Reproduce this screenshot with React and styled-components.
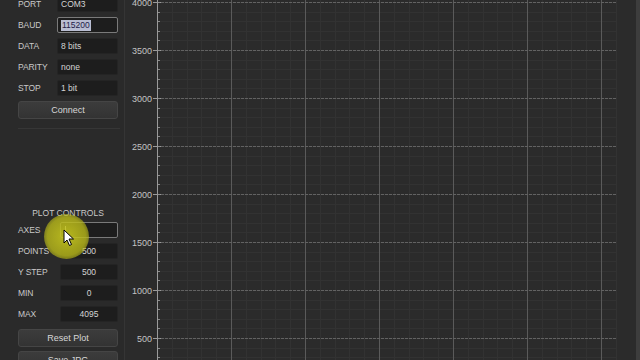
import React from "react";
import styled, { createGlobalStyle } from "styled-components";

const GlobalStyle = createGlobalStyle`
  html, body {
    margin: 0;
    padding: 0;
    background: #2b2b2b;
  }
  body {
    font-family: "Liberation Sans", Arial, sans-serif;
  }
`;

const Screen = styled.div`
  display: flex;
  width: 640px;
  height: 360px;
  overflow: hidden;
  background: #2b2b2b;
  position: relative;
`;

const Panel = styled.div`
  position: relative;
  width: 125px;
  flex-shrink: 0;
  background: #2a2a2a;
  border-right: 1px solid #353535;
  display: flex;
  flex-direction: column;
  padding-left: 18px;
  box-sizing: border-box;
  overflow: hidden;
`;

const Group = styled.div`
  display: flex;
  flex-direction: column;
  flex-shrink: 0;
  gap: 5px;
  width: 100px;
  margin-top: ${(p) => p.$top || 0}px;
`;

const Row = styled.div`
  display: grid;
  grid-template-columns: ${(p) => p.$label}px 1fr;
  align-items: center;
  height: 16px;
  flex-shrink: 0;
`;

const Label = styled.span`
  font-size: 8.5px;
  color: #c9c9c9;
  letter-spacing: -0.1px;
`;

const Field = styled.div`
  height: 16px;
  box-sizing: border-box;
  background: #1d1d1d;
  border: 1px solid ${(p) => (p.$focus ? "#7a7a7a" : "#242424")};
  border-radius: 2px;
  display: flex;
  align-items: center;
  justify-content: ${(p) => (p.$center ? "center" : "flex-start")};
  padding-left: ${(p) => (p.$center ? 0 : 3)}px;
  font-size: 8.5px;
  color: #d4d4d4;
`;

const Selected = styled.span`
  background: #b9bdd2;
  color: #1e2148;
  padding: 0 1px;
  line-height: 11px;
`;

const Caret = styled.span`
  width: 1px;
  height: 9px;
  background: #d0d0d0;
  margin-left: 1px;
`;

const Button = styled.div`
  height: 18px;
  flex-shrink: 0;
  width: 100px;
  box-sizing: border-box;
  border-radius: 3px;
  border: 1px solid #454545;
  background: linear-gradient(#3c3c3c, #333);
  display: flex;
  align-items: center;
  justify-content: center;
  font-size: 9px;
  color: #d6d6d6;
  margin-top: ${(p) => p.$top || 0}px;
`;

const Separator = styled.div`
  width: 102px;
  height: 1px;
  flex-shrink: 0;
  background: #363636;
  margin-top: 9px;
`;

const Title = styled.div`
  width: 100px;
  flex-shrink: 0;
  text-align: center;
  font-size: 8.5px;
  color: #c9c9c9;
  line-height: 12px;
  margin-top: 78px;
  margin-bottom: 3px;
`;

const Highlight = styled.div`
  position: absolute;
  left: 44px;
  top: 214px;
  width: 45px;
  height: 45px;
  border-radius: 50%;
  background: radial-gradient(circle, rgba(200, 200, 30, 0.9) 0%, rgba(185, 185, 25, 0.8) 60%, rgba(150, 150, 20, 0) 100%);
  pointer-events: none;
`;

const Cursor = styled.svg`
  position: absolute;
  left: 63px;
  top: 229px;
`;

const Chart = styled.div`
  flex: 1;
  position: relative;
  background: #2b2b2b;
`;

const Edge = styled.div`
  width: 4px;
  flex-shrink: 0;
  background: #3d3d3d;
`;

const serial = [
  ["PORT", "COM3"],
  ["BAUD", "115200"],
  ["DATA", "8 bits"],
  ["PARITY", "none"],
  ["STOP", "1 bit"],
];

const plot = [
  ["POINTS", "500"],
  ["Y STEP", "500"],
  ["MIN", "0"],
  ["MAX", "4095"],
];

const PlotGrid = () => {
  const x0 = 32;
  const x1 = 492;
  const step = 48;
  const colStep = 74;
  const labels = [4000, 3500, 3000, 2500, 2000, 1500, 1000, 500];
  const minorH = [];
  for (let y = 2; y < 360; y += step / 5) minorH.push(Math.round(y));
  const minorV = [];
  for (let x = x0; x <= x1; x += colStep / 5) minorV.push(Math.round(x));
  const cols = [];
  for (let x = x0 + colStep; x < x1; x += colStep) cols.push(x);
  return (
    <svg width="510" height="360" style={{ display: "block" }}>
      {minorH.map((y) => (
        <line key={"mh" + y} x1={x0} x2={x1} y1={y + 0.5} y2={y + 0.5} stroke="#323232" strokeWidth="1" />
      ))}
      {minorV.map((x) => (
        <line key={"mv" + x} x1={x + 0.5} x2={x + 0.5} y1={0} y2={360} stroke="#323232" strokeWidth="1" />
      ))}
      {cols.map((x) => (
        <line key={"c" + x} x1={x + 0.5} x2={x + 0.5} y1={0} y2={360} stroke="#5a5a5a" strokeWidth="1" />
      ))}
      {labels.map((v, i) => {
        const y = 2 + i * step + 0.5;
        return (
          <g key={v}>
            <line x1={x0} x2={x1} y1={y} y2={y} stroke="#626262" strokeWidth="1" strokeDasharray="3 1" />
            <line x1={x0 - 4} x2={x0 + 4} y1={y} y2={y} stroke="#9a9a9a" strokeWidth="1" />
            <text x={x0 - 5} y={y + 3} fontSize="9" fill="#c4c4c4" textAnchor="end" fontFamily="Liberation Sans, Arial, sans-serif">
              {v}
            </text>
          </g>
        );
      })}
      {minorH.map((y) => (
        <line key={"t" + y} x1={x0} x2={x0 + 3} y1={y + 0.5} y2={y + 0.5} stroke="#8a8a8a" strokeWidth="1" />
      ))}
      <line x1={x0 + 0.5} x2={x0 + 0.5} y1={0} y2={360} stroke="#9a9a9a" strokeWidth="1" />
    </svg>
  );
};

const App = () => {
  return (
    <>
      <GlobalStyle />
      <Screen>
        <Panel>
          <Group $top={-4}>
            {serial.map(([k, v]) => (
              <Row key={k} $label={39}>
                <Label>{k}</Label>
                <Field $focus={k === "BAUD"}>
                  {k === "BAUD" ? <Selected>{v}</Selected> : v}
                </Field>
              </Row>
            ))}
          </Group>
          <Button $top={5}>Connect</Button>
          <Separator />
          <Title>PLOT CONTROLS</Title>
          <Group>
            <Row $label={42}>
              <Label>AXES</Label>
              <Field $focus>
                <Caret />
              </Field>
            </Row>
            {plot.map(([k, v]) => (
              <Row key={k} $label={42}>
                <Label>{k}</Label>
                <Field $center>{v}</Field>
              </Row>
            ))}
            <Button $top={2}>Reset Plot</Button>
            <Button $top={-1}>Save JPG</Button>
          </Group>
          <Highlight />
          <Cursor width="12" height="18" viewBox="0 0 12 18">
            <path d="M1 1 L1 14 L4 11 L6.5 16.5 L8.5 15.5 L6 10 L10.5 10 Z" fill="#fff" stroke="#000" strokeWidth="1" />
          </Cursor>
        </Panel>
        <Chart>
          <PlotGrid />
        </Chart>
        <Edge />
      </Screen>
    </>
  );
};

export default App;
